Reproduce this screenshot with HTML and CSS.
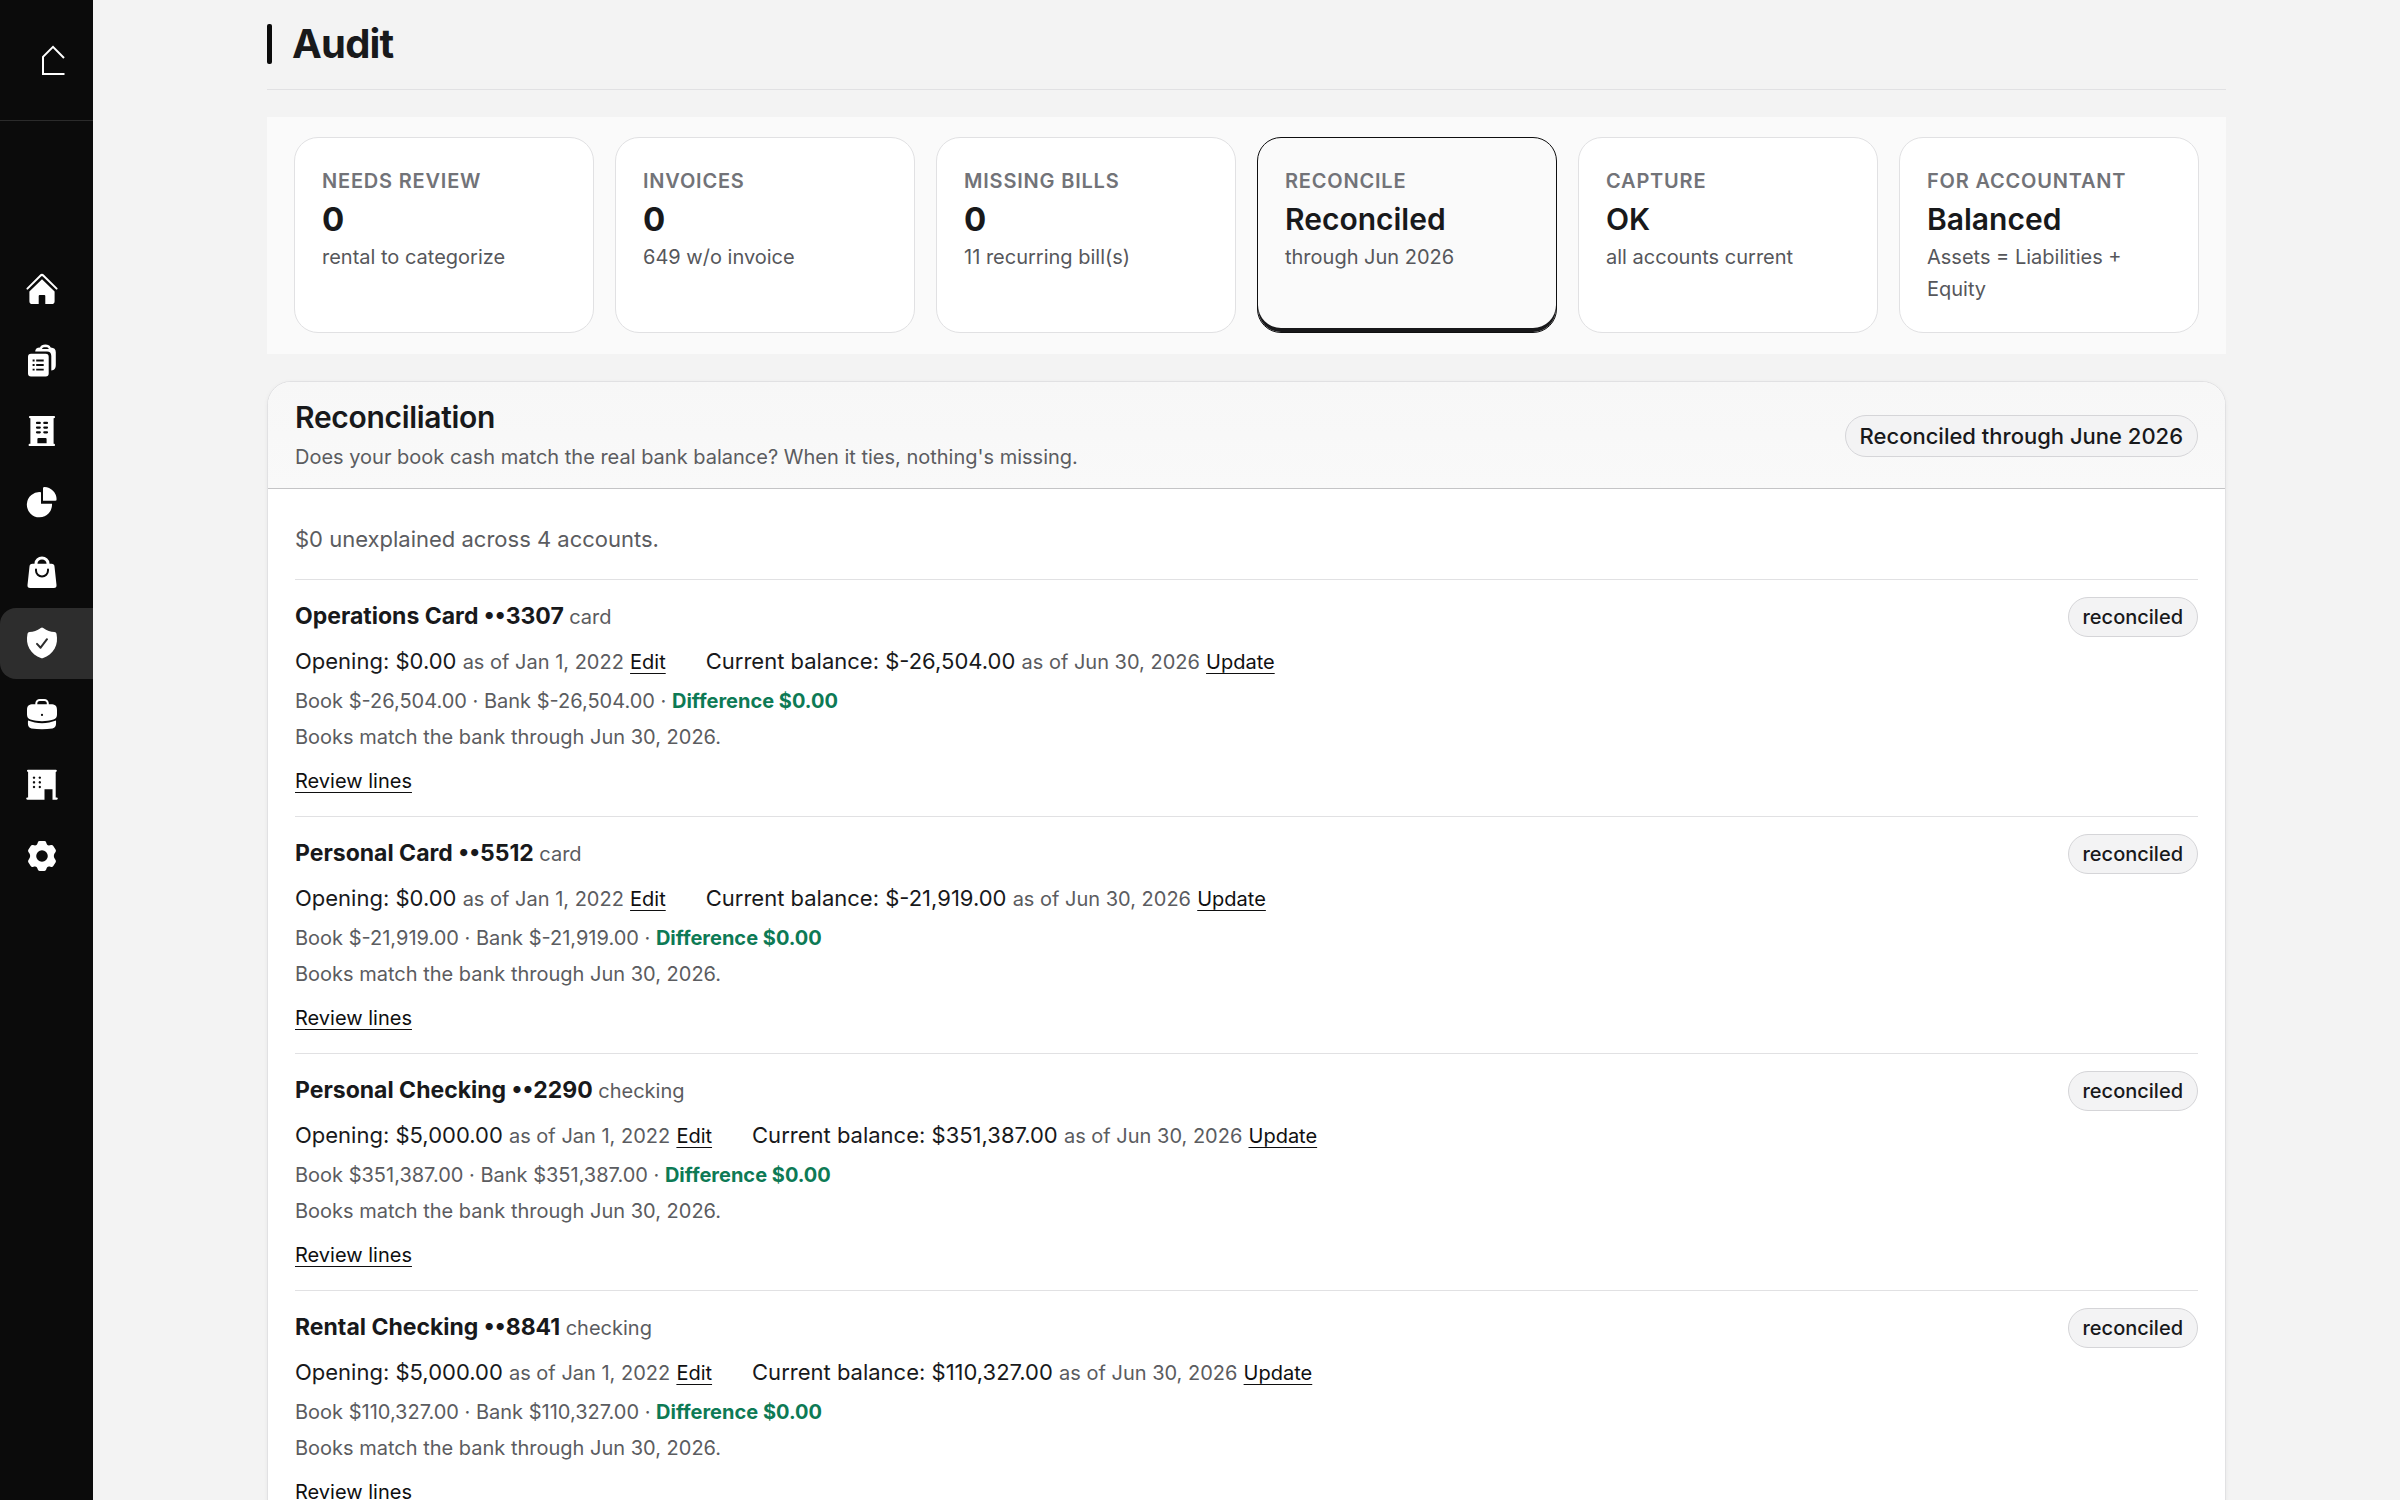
FILE: index.html
```html
<!DOCTYPE html>
<html lang="en">
<head>
<meta charset="utf-8">
<meta name="viewport" content="width=device-width, initial-scale=1">
<title>Audit</title>
<link rel="stylesheet" href="styles.css">
</head>
<body>
<div class="app">
  <aside class="sidebar">
    <a class="brand" href="#" aria-label="Home page">
      <svg class="brand-mark" viewBox="0 0 24 32" aria-hidden="true"><path d="M23 14 12 2.800 2 12.800V30H23.500"/></svg>
    </a>
    <nav class="nav" aria-label="Main">
      <a class="nav-item" href="#" aria-label="Home">
        <svg class="icon" viewBox="0 0 32 32" aria-hidden="true"><path class="line" d="M1.400 15.600 14.400 2.700a2.200 2.200 0 0 1 3.100 0L30.600 15.600"/><path d="M16 6.300 28.600 18.600V28.200a2.800 2.800 0 0 1-2.800 2.800H19.300V23a1 1 0 0 0-1-1H13.700a1 1 0 0 0-1 1V31H6.200a2.800 2.800 0 0 1-2.800-2.800V18.600Z"/></svg>
      </a>
      <a class="nav-item" href="#" aria-label="Records">
        <svg class="icon" viewBox="0 0 32 32" aria-hidden="true"><path fill-rule="evenodd" d="M9.200 7.600C9.200 4.800 10.800 3.600 14 3.400 15 1.500 16.600.6 19.400.6S23.700 1.500 24.700 3.400C28.200 3.600 29.800 5.200 29.800 8.300V20.500C29.800 24.500 28.600 26 25.300 26.600V12C25.300 9 23.600 7.600 21 7.600ZM16 4.900H22.800C22.300 3.700 21.300 3.300 19.400 3.300S16.500 3.700 16 4.900Z"/><path fill-rule="evenodd" d="M5 9.700H19.700A3 3 0 0 1 22.700 12.700V29.600A3 3 0 0 1 19.700 32.600H5A3 3 0 0 1 2 29.600V12.700A3 3 0 0 1 5 9.700ZM6.600 15.500v1.900h2v-1.900ZM10.200 15.500v1.900h7.500v-1.900ZM6.600 20.100V22h2v-1.900ZM10.200 20.100V22h7.500v-1.900ZM6.600 24.700v1.900h2v-1.900ZM10.200 24.700v1.900h7.500v-1.900Z"/></svg>
      </a>
      <a class="nav-item" href="#" aria-label="Properties">
        <svg class="icon" viewBox="0 0 32 32" aria-hidden="true"><path fill-rule="evenodd" d="M4 1H28A1 1 0 0 1 28 3.200H27.600V28.800H28.300A1.200 1.200 0 0 1 28.300 31H3.300A1.200 1.200 0 0 1 3.300 28.800H4.400V3.200H4A1 1 0 0 1 4 1ZM11 6.800a1.100 1.100 0 0 0 0 2.200h2.800a1.100 1.100 0 0 0 0-2.200ZM18.300 6.800a1.100 1.100 0 0 0 0 2.200H21a1.100 1.100 0 0 0 0-2.200ZM11 11.500a1.100 1.100 0 0 0 0 2.200h2.800a1.100 1.100 0 0 0 0-2.200ZM18.300 11.500a1.100 1.100 0 0 0 0 2.200H21a1.100 1.100 0 0 0 0-2.200ZM11 16.200a1.100 1.100 0 0 0 0 2.200h2.800a1.100 1.100 0 0 0 0-2.200ZM18.300 16.200a1.100 1.100 0 0 0 0 2.200H21a1.100 1.100 0 0 0 0-2.200ZM12.400 22.900a1 1 0 0 0-1 1V28.300H20.600V23.900a1 1 0 0 0-1-1Z"/></svg>
      </a>
      <a class="nav-item" href="#" aria-label="Reports">
        <svg class="icon" viewBox="0 0 32 32" aria-hidden="true"><path d="M15 6.200V17.700H26A12.600 12.600 0 1 1 15 6.200Z"/><path d="M18.500 1.100A12.600 12.600 0 0 1 30.600 13.300 1.400 1.400 0 0 1 29.200 14.800H17V2.500A1.400 1.400 0 0 1 18.500 1.100Z"/></svg>
      </a>
      <a class="nav-item" href="#" aria-label="Purchases">
        <svg class="icon" viewBox="0 0 32 32" aria-hidden="true"><path class="line-thick" d="M10 9V7.500a6 5.400 0 0 1 12 0V9"/><path d="M6.500 7.700H25.500A3 3 0 0 1 28.500 10.500L30.500 29A2.700 2.700 0 0 1 27.800 32H4.200A2.700 2.700 0 0 1 1.500 29L3.500 10.500A3 3 0 0 1 6.500 7.700Z"/><path class="cut" d="M10 13.500V14.500a6 6 0 0 0 12 0V13.500"/></svg>
      </a>
      <a class="nav-item active" href="#" aria-label="Audit" aria-current="page">
        <svg class="icon" viewBox="0 0 32 32" aria-hidden="true"><path d="M14.800.9Q16 .1 17.200.9C21 3.600 24.500 4.600 28.500 4.900Q30.200 5 30.500 6.700C31.500 12 31.200 17 28.700 21.500 26 26.300 21.800 29.500 17.200 31Q16 31.400 14.800 31C10.200 29.500 6 26.300 3.300 21.500.8 17 .5 12 1.500 6.700Q1.800 5 3.500 4.900C7.500 4.600 11 3.600 14.800.9Z"/><path class="cut" d="M11 16.900 14.600 20.700 21 12.200"/></svg>
      </a>
      <a class="nav-item" href="#" aria-label="Business">
        <svg class="icon" viewBox="0 0 32 32" aria-hidden="true"><path class="line" d="M10.300 7.500V5.500A3.500 3.500 0 0 1 13.800 2H18.300A3.500 3.500 0 0 1 21.800 5.500V7.500"/><path fill-rule="evenodd" d="M7.500 6.200H24.500C29.200 6.200 31 7.700 31 12V16.500C31 19.300 29.900 20.800 27.500 21.600 20 23.900 12 23.900 4.500 21.600 2.100 20.800 1 19.300 1 16.500V12C1 7.700 2.800 6.200 7.500 6.200ZM16 15.800a1.100 1.100 0 1 0 0 2.200 1.100 1.100 0 0 0 0-2.200Z"/><path d="M2 22.600C10.500 26 21.500 26 30 22.600 30.300 27.600 29.800 29.500 26.500 30.400 19.500 31.500 12.500 31.500 5.500 30.400 2.200 29.500 1.700 27.600 2 22.600Z"/></svg>
      </a>
      <a class="nav-item" href="#" aria-label="Company">
        <svg class="icon" viewBox="0 0 32 32" aria-hidden="true"><path fill-rule="evenodd" d="M2 .8H29.800A1 1 0 0 1 29.800 2.900H29.700V28.500H30.700A1.100 1.100 0 0 1 30.700 30.700H26.500V20.300H18.500V30.700H1.300A1.100 1.100 0 0 1 1.300 28.500H2.100V2.900H2A1 1 0 0 1 2 .8ZM8 7.400a1.200 1.200 0 1 0 .01 0ZM13.800 7.400a1.200 1.200 0 1 0 .01 0ZM8 12.100a1.200 1.200 0 1 0 .01 0ZM13.800 12.100a1.200 1.200 0 1 0 .01 0ZM8 16.800a1.200 1.200 0 1 0 .01 0ZM13.800 16.800a1.200 1.200 0 1 0 .01 0Z"/></svg>
      </a>
      <a class="nav-item" href="#" aria-label="Settings">
        <svg class="icon" viewBox="0 0 32 32" aria-hidden="true"><path fill-rule="evenodd" d="M13.600 1H18.400Q19.800 1 20.200 2.400C20.900 5.300 22 5.900 25 5.100Q26.500 4.700 27.300 6L29.700 9.800Q30.400 11.100 29.400 12.200C27.300 14.800 27.300 16.800 29.400 19.800Q30.400 20.900 29.700 22.200L27.300 26Q26.500 27.300 25 26.900C22 26.100 20.900 26.700 20.200 29.600Q19.800 31 18.400 31H13.600Q12.200 31 11.800 29.600C11.100 26.700 10 26.100 7 26.900Q5.500 27.300 4.700 26L2.300 22.200Q1.600 20.900 2.600 19.800C4.700 16.800 4.700 14.800 2.600 12.200Q1.600 11.100 2.300 9.800L4.700 6Q5.500 4.700 7 5.100C10 5.900 11.100 5.300 11.800 2.400Q12.200 1 13.600 1ZM16 10.200a5.800 5.800 0 1 0 0 11.600 5.800 5.800 0 0 0 0-11.600Z"/></svg>
      </a>
    </nav>
  </aside>

  <main class="main">
    <div class="page">
      <header class="page-head"><h1 class="page-title">Audit</h1></header>

      <section class="stats" aria-label="Audit summary">
        <button type="button" class="stat"><span class="stat-label">Needs review</span><span class="stat-value number">0</span><span class="stat-note">rental to categorize</span></button>
        <button type="button" class="stat"><span class="stat-label">Invoices</span><span class="stat-value number">0</span><span class="stat-note">649 w/o invoice</span></button>
        <button type="button" class="stat"><span class="stat-label">Missing bills</span><span class="stat-value number">0</span><span class="stat-note">11 recurring bill(s)</span></button>
        <button type="button" class="stat selected" aria-pressed="true"><span class="stat-label">Reconcile</span><span class="stat-value">Reconciled</span><span class="stat-note">through Jun 2026</span></button>
        <button type="button" class="stat"><span class="stat-label">Capture</span><span class="stat-value">OK</span><span class="stat-note">all accounts current</span></button>
        <button type="button" class="stat"><span class="stat-label">For accountant</span><span class="stat-value">Balanced</span><span class="stat-note">Assets = Liabilities + Equity</span></button>
      </section>

      <section class="panel">
        <header class="panel-head">
          <div class="panel-heading">
            <h2 class="panel-title">Reconciliation</h2>
            <p class="muted">Does your book cash match the real bank balance? When it ties, nothing's missing.</p>
          </div>
          <span class="pill pill-large">Reconciled through June 2026</span>
        </header>
        <div class="panel-body">
          <p class="summary">$0 unexplained across 4 accounts.</p>

          <article class="account">
            <div class="account-head"><h3 class="account-name">Operations Card ••3307 <span class="kind">card</span></h3><span class="pill">reconciled</span></div>
            <div class="balances">
              <span>Opening: $0.00 <span class="date">as of Jan 1, 2022</span> <a class="link" href="#">Edit</a></span>
              <span>Current balance: $-26,504.00 <span class="date">as of Jun 30, 2026</span> <a class="link" href="#">Update</a></span>
            </div>
            <p class="muted compare">Book $-26,504.00 · Bank $-26,504.00 · <strong class="diff">Difference $0.00</strong></p>
            <p class="muted status">Books match the bank through Jun 30, 2026.</p>
            <p class="review"><a class="link" href="#">Review lines</a></p>
          </article>

          <article class="account">
            <div class="account-head"><h3 class="account-name">Personal Card ••5512 <span class="kind">card</span></h3><span class="pill">reconciled</span></div>
            <div class="balances">
              <span>Opening: $0.00 <span class="date">as of Jan 1, 2022</span> <a class="link" href="#">Edit</a></span>
              <span>Current balance: $-21,919.00 <span class="date">as of Jun 30, 2026</span> <a class="link" href="#">Update</a></span>
            </div>
            <p class="muted compare">Book $-21,919.00 · Bank $-21,919.00 · <strong class="diff">Difference $0.00</strong></p>
            <p class="muted status">Books match the bank through Jun 30, 2026.</p>
            <p class="review"><a class="link" href="#">Review lines</a></p>
          </article>

          <article class="account">
            <div class="account-head"><h3 class="account-name">Personal Checking ••2290 <span class="kind">checking</span></h3><span class="pill">reconciled</span></div>
            <div class="balances">
              <span>Opening: $5,000.00 <span class="date">as of Jan 1, 2022</span> <a class="link" href="#">Edit</a></span>
              <span>Current balance: $351,387.00 <span class="date">as of Jun 30, 2026</span> <a class="link" href="#">Update</a></span>
            </div>
            <p class="muted compare">Book $351,387.00 · Bank $351,387.00 · <strong class="diff">Difference $0.00</strong></p>
            <p class="muted status">Books match the bank through Jun 30, 2026.</p>
            <p class="review"><a class="link" href="#">Review lines</a></p>
          </article>

          <article class="account">
            <div class="account-head"><h3 class="account-name">Rental Checking ••8841 <span class="kind">checking</span></h3><span class="pill">reconciled</span></div>
            <div class="balances">
              <span>Opening: $5,000.00 <span class="date">as of Jan 1, 2022</span> <a class="link" href="#">Edit</a></span>
              <span>Current balance: $110,327.00 <span class="date">as of Jun 30, 2026</span> <a class="link" href="#">Update</a></span>
            </div>
            <p class="muted compare">Book $110,327.00 · Bank $110,327.00 · <strong class="diff">Difference $0.00</strong></p>
            <p class="muted status">Books match the bank through Jun 30, 2026.</p>
            <p class="review"><a class="link" href="#">Review lines</a></p>
          </article>
        </div>
      </section>
    </div>
  </main>
</div>
</body>
</html>
```

FILE: styles.css
```css
:root {
  --ink: #18191b;
  --muted: #5b5c60;
  --line: #e1e1e3;
  --side: #0b0b0b;
}

* { box-sizing: border-box; }

body {
  margin: 0;
  background: #f3f3f3;
  color: var(--ink);
  font-family: Inter, "Liberation Sans", sans-serif;
  font-size: 20px;
  line-height: 31px;
}

h1, h2, h3, p { margin: 0; }

.app { display: flex; height: 100vh; }

/* Sidebar */
.sidebar {
  display: flex;
  flex: none;
  flex-direction: column;
  width: 93px;
  background: var(--side);
}

.brand {
  display: flex;
  align-items: center;
  height: 121px;
  padding-left: 41px;
  border-bottom: 1px solid #2b2b2b;
}

.brand-mark {
  width: 24px;
  height: 32px;
  fill: none;
  stroke: #fff;
  stroke-width: 2;
}

.nav {
  display: grid;
  grid-auto-rows: 1fr;
  height: 637px;
  margin-top: 133px;
}

.nav-item {
  display: flex;
  align-items: center;
  padding-left: 26px;
  border-radius: 16px 0 0 16px;
  color: #fff;
}

.nav-item.active { background: #2d2d2d; }

.icon {
  width: 32px;
  height: 32px;
  overflow: visible;
  fill: currentColor;
}

.icon .line,
.icon .line-thick,
.icon .cut {
  fill: none;
  stroke: currentColor;
  stroke-width: 2;
  stroke-linecap: round;
  stroke-linejoin: round;
}

.icon .line-thick { stroke-width: 3; }
.icon .cut { stroke: var(--side); }
.active .icon .cut { stroke: #2d2d2d; }

/* Page */
.main {
  flex: 1;
  min-width: 0;
  overflow-y: auto;
  scrollbar-width: none;
}

.page {
  display: grid;
  gap: 27px;
  max-width: 1959px;
  margin: 0 auto;
  padding: 24px 0;
}

.page-head {
  padding-bottom: 25px;
  border-bottom: 1px solid var(--line);
}

.page-title {
  display: flex;
  gap: 20px;
  font-size: 40px;
  font-weight: 700;
  line-height: 40px;
  letter-spacing: -0.02em;
}

.page-title::before {
  content: "";
  width: 5px;
  border-radius: 2px;
  background: #0b0b0b;
}

/* Summary cards */
.stats {
  display: grid;
  grid-template-columns: repeat(6, 1fr);
  gap: 21px;
  padding: 20px 27px 21px;
  background: #fafafa;
}

.stat {
  display: flex;
  flex-direction: column;
  gap: 5px;
  padding: 27px;
  border: 1px solid var(--line);
  border-radius: 24px;
  background: #fff;
  color: var(--ink);
  font: inherit;
  text-align: left;
}

.stat.selected {
  border-color: #0f0f10;
  background: #fafafa;
  box-shadow: inset 0 -4px 0 #18181a;
}

.stat-label {
  color: #727378;
  font-weight: 600;
  line-height: 32px;
  letter-spacing: 0.04em;
  text-transform: uppercase;
}

.stat-value {
  font-size: 30px;
  font-weight: 600;
  line-height: 34px;
}

.stat-value.number { font-size: 33px; font-weight: 700; }

.stat-note { color: #56575b; line-height: 32px; }

/* Reconciliation panel */
.panel {
  border: 1px solid var(--line);
  border-radius: 24px;
  background: #fff;
  box-shadow: 0 1px 4px rgba(0, 0, 0, 0.05);
  overflow: hidden;
}

.panel-head {
  display: flex;
  align-items: center;
  justify-content: space-between;
  padding: 17px 27px 15px;
  border-bottom: 1px solid #c4c4c6;
  background: linear-gradient(#f7f7f7, #f9f9f9);
}

.panel-heading { display: grid; gap: 7px; }

.panel-title {
  font-size: 30px;
  font-weight: 600;
  line-height: 36px;
  letter-spacing: -0.01em;
}

.muted { color: var(--muted); }

.pill {
  padding: 0 14px;
  border: 1px solid #d5d5d8;
  border-radius: 20px;
  background: #f3f3f4;
  font-size: 20px;
  font-weight: 500;
  line-height: 38px;
}

.pill-large { border-radius: 21px; font-size: 22px; line-height: 40px; }

.panel-body { padding: 33px 27px 27px; }

.summary {
  margin-bottom: 23px;
  color: var(--muted);
  font-size: 22px;
  line-height: 34px;
}

.account {
  padding: 17px 0 19px;
  border-top: 1px solid var(--line);
}

.account-head {
  display: flex;
  align-items: center;
  justify-content: space-between;
}

.account-name { font-size: 23px; font-weight: 700; }

.kind { color: var(--muted); font-size: 20px; font-weight: 400; }

.balances {
  display: flex;
  flex-wrap: wrap;
  gap: 40px;
  margin-top: 7px;
  font-size: 22px;
  line-height: 34px;
}

.date { color: var(--muted); font-size: 20px; }

.link {
  color: #0f0f10;
  font-size: 20px;
  text-decoration-thickness: 1px;
  text-underline-offset: 4px;
}

.compare { margin-top: 7px; }
.status { margin-top: 5px; }
.review { margin-top: 13px; }

.diff { color: #0d7a55; font-weight: 700; }
```
